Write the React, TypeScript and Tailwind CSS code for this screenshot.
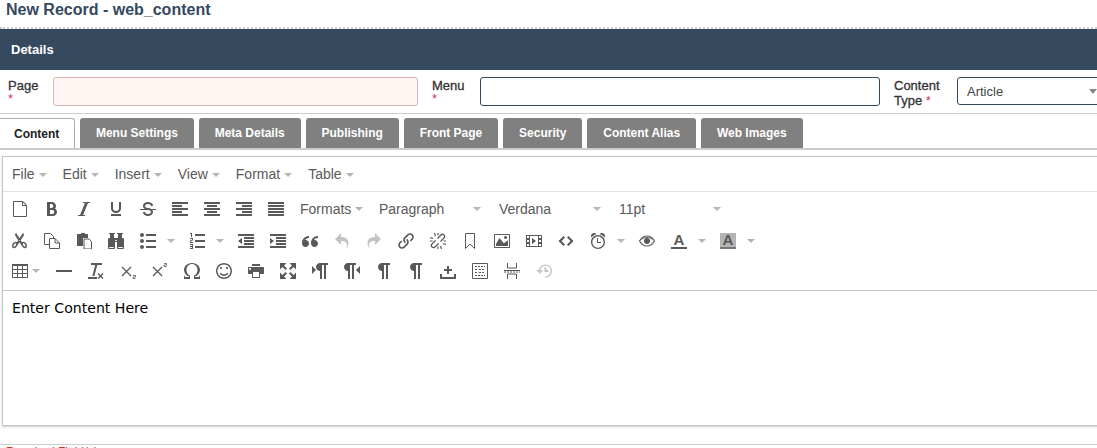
import React from 'react';
import {
  ImFileEmpty, ImBold, ImItalic, ImUnderline, ImStrikethrough, ImParagraphLeft, ImParagraphCenter,
  ImParagraphRight, ImParagraphJustify, ImScissors, ImBinoculars, ImList2,
  ImListNumbered, ImIndentDecrease, ImIndentIncrease, ImQuotesLeft, ImUndo2, ImRedo2, ImLink,
  ImImage, ImFilm, ImEmbed, ImAlarm, ImTable2, ImClearFormatting,
  ImOmega, ImSmile, ImPrinter, ImEnlarge, ImLtr, ImRtl, ImPilcrow, ImHistory,
} from 'react-icons/im';

const Caret = () => <span className="inline-block shrink-0 w-0 h-0 border-x-[4px] border-x-transparent border-t-[4px] border-t-[#b5b5b5]" />;

const Copy = () => (
  <svg width="16" height="16" viewBox="0 0 16 16" fill="none" stroke="currentColor">
    <path d="M.5 .5h6l3 3v1.500M.5 .5v11h5" />
    <path d="M5.500 5.500h5.500l4.500 4.500v5.500h-10z" />
    <path d="M11 5.500v4.500h4.500" />
  </svg>
);

const Paste = () => (
  <svg width="16" height="16" viewBox="0 0 16 16" fill="currentColor">
    <path d="M5 0h4v1h3v4H7v8H1V1h4z" />
    <path d="M8 6h5l2.500 2.500V16H8z" fill="#fff" stroke="currentColor" />
  </svg>
);

const Unlink = () => (
  <svg width="16" height="16" viewBox="0 0 16 16" fill="none" stroke="currentColor" strokeWidth="1.200">
    <path d="M5.500 7.500L2 11a2.100 2.100 0 0 0 3 3l3.500-3.500M10.500 8.500L14 5a2.100 2.100 0 0 0-3-3L7.500 5.500" />
    <path d="M0 4.500l3 1M4.500 0l1 3M16 11.500l-3-1M11.500 16l-1-3M0 8h2.500M8 0v2.500M16 8h-2.500M8 16v-2.500" />
  </svg>
);

const Bookmark = () => (
  <svg width="16" height="16" viewBox="0 0 16 16" fill="none" stroke="currentColor" strokeWidth="1">
    <path d="M3.500 .5h9v15L8 11l-4.500 4.500z" />
  </svg>
);

const Eye = () => (
  <svg width="16" height="16" viewBox="0 0 16 16" fill="none" stroke="currentColor">
    <path d="M.5 8C2.500 4.500 5 3 8 3s5.500 1.500 7.500 5c-2 3.500-4.500 5-7.500 5S2.500 11.500.5 8z" strokeWidth="1.200" />
    <path d="M2.500 6.500C4 5 6 4.500 8 4.500s4 .5 5.500 2" />
    <circle cx="8" cy="8" r="3" fill="currentColor" stroke="none" />
  </svg>
);

const Sub = () => (
  <svg width="16" height="16" viewBox="0 0 16 16" fill="none" stroke="currentColor" strokeWidth="1.300">
    <path d="M2 4l9 9M11 4l-9 9" />
    <path d="M13 12.500h2.500v1.500H13v1.500h2.500" strokeWidth=".8" />
  </svg>
);

const Sup = () => (
  <svg width="16" height="16" viewBox="0 0 16 16" fill="none" stroke="currentColor" strokeWidth="1.300">
    <path d="M1 4l9 9M10 4l-9 9" />
    <path d="M12 .5h2.500V2H12v1.500h2.500" strokeWidth=".8" />
  </svg>
);

const Hr = () => <span className="block w-4 h-[2px] bg-[#595959]" />;

const Nonbreaking = () => (
  <svg width="16" height="16" viewBox="0 0 16 16" fill="currentColor">
    <path d="M7 3h2v3h3v2H9v3H7V8H4V6h3zM0 11h2v3h12v-3h2v5H0z" />
  </svg>
);

const Template = () => (
  <svg width="16" height="16" viewBox="0 0 16 16" fill="none" stroke="currentColor">
    <path d="M.5 .5h15v15H.5z" />
    <path d="M3 3.500h10M3 6.500h3M7 6.500h2M10 6.500h3M3 9.500h3M7 9.500h2M10 9.500h3M3 12.500h10" strokeDasharray="2 1" />
  </svg>
);

const PageBreak = () => (
  <svg width="16" height="16" viewBox="0 0 16 16" fill="none" stroke="currentColor">
    <path d="M3.500 0v5h9V0M3.500 16v-5h9v5M0 7.500h16" />
    <path d="M0 9h16" strokeDasharray="2 1" />
  </svg>
);

const TextColor = () => (
  <span className="block w-4 h-4 font-bold text-[15px] leading-[14px] text-center border-b-2 border-[#595959]">A</span>
);

const BackColor = () => (
  <span className="block w-4 h-4 bg-[#b3b3b3] font-bold text-[15px] leading-[14px] text-center border-b-2 border-[#777]">A</span>
);

const Btn = ({ children, caret, off }: { children: React.ReactNode; caret?: boolean; off?: boolean }) => (
  <div className={`flex items-center h-4 text-[16px] ${caret ? 'w-[49px] pl-[8px] gap-[11px]' : 'w-[32px] justify-center'} ${off ? 'text-[#c4c4c4]' : 'text-[#595959]'}`}>
    {children}
    {caret && <Caret />}
  </div>
);

const tabs = ['Menu Settings', 'Meta Details', 'Publishing', 'Front Page', 'Security', 'Content Alias', 'Web Images'];
const menus = ['File', 'Edit', 'Insert', 'View', 'Format', 'Table'];

const Combo = ({ label, width }: { label: string; width: string }) => (
  <div className={`flex items-center justify-between ${width}`}>
    <span>{label}</span>
    <Caret />
  </div>
);

export default function App() {
  return (
    <div className="w-[1097px] h-[448px] overflow-hidden bg-white font-['Liberation_Sans',Arial,sans-serif] text-[#333]">
      <h1 className="h-[29px] pl-[6px] pt-[1px] text-[16px] leading-[18px] font-bold text-[#34495e] border-b-2 border-dotted border-[#ccc]">
        New Record - web_content
      </h1>
      <div className="h-[41px] bg-[#364a5f] pl-[11px] flex items-center text-[13px] font-bold text-white">Details</div>

      <div className="h-[44px] flex items-start pt-[7px] border-b border-[#ccc] w-[1200px] text-[13px] leading-[14px] [-webkit-text-stroke:0.3px_#333]">
        <div className="w-[53px] pl-[8px] pt-[2px]">
          Page<div className="text-[#d9345b] leading-[12px] [-webkit-text-stroke:0]">*</div>
        </div>
        <div className="w-[365px] h-[29px] rounded-[3px] border border-[#e0b4b4] bg-[#fff6f4]" />
        <div className="w-[62px] pl-[14px] pt-[2px]">
          Menu<div className="text-[#d9345b] leading-[12px] [-webkit-text-stroke:0]">*</div>
        </div>
        <div className="w-[400px] h-[29px] rounded-[3px] border border-[#34495e]" />
        <div className="w-[77px] pl-[14px] pt-[1px] leading-[15px]">
          Content Type <span className="text-[#d9345b] [-webkit-text-stroke:0]">*</span>
        </div>
        <div className="w-[148px] h-[28px] pt-[1px] rounded-[3px] border border-[#34495e] flex items-center justify-between pl-[9px] pr-[7px] text-[#444] [-webkit-text-stroke:0]">
          Article
          <span className="inline-block w-0 h-0 border-x-[4px] border-x-transparent border-t-[5px] border-t-[#888]" />
        </div>
      </div>

      <div className="h-[36px] pt-[4px] flex gap-[5px] border-b-2 border-[#ccc] text-[12px] font-bold">
        <div className="h-[30px] w-[75px] pl-[14px] flex items-center bg-white border border-b-0 border-l-0 border-[#aaa] rounded-tr-[3px] text-[#222]">Content</div>
        {tabs.map((t) => (
          <div key={t} className="h-[30px] px-[15.900px] flex items-center bg-[#808080] text-white rounded-t-[3px]">{t}</div>
        ))}
      </div>

      <div className="ml-[2px] mt-[6px] w-[1200px] h-[270px] border border-[#c5c5c5] shadow-[0_1px_2px_#ccc] flex flex-col">
        <div className="h-[35px] flex items-center pl-[9px] pt-[1px] gap-[16px] border-b border-[#e2e2e2] text-[14px] text-[#595959]">
          {menus.map((m) => (
            <span key={m} className="flex items-center gap-[4px]">{m}<Caret /></span>
          ))}
        </div>

        <div className="h-[99px] pt-[9px] pl-[1px] flex flex-col gap-[16px] border-b border-[#c5c5c5] leading-none">
          <div className="flex items-center h-4">
            <Btn><ImFileEmpty /></Btn><Btn><ImBold /></Btn><Btn><ImItalic /></Btn><Btn><ImUnderline /></Btn><Btn><ImStrikethrough /></Btn>
            <Btn><ImParagraphLeft /></Btn><Btn><ImParagraphCenter /></Btn><Btn><ImParagraphRight /></Btn><Btn><ImParagraphJustify /></Btn>
            <div className="ml-[8px] flex text-[14px] text-[#595959]">
              <Combo label="Formats" width="w-[79px] pr-[16px]" />
              <Combo label="Paragraph" width="w-[120px] pr-[18px]" />
              <Combo label="Verdana" width="w-[120px] pr-[18px]" />
              <Combo label="11pt" width="w-[120px] pr-[18px]" />
            </div>
          </div>
          <div className="flex items-center h-4">
            <Btn><ImScissors /></Btn><Btn><Copy /></Btn><Btn><Paste /></Btn><Btn><ImBinoculars /></Btn>
            <Btn caret><ImList2 /></Btn><Btn caret><ImListNumbered /></Btn>
            <Btn><ImIndentDecrease /></Btn><Btn><ImIndentIncrease /></Btn><Btn><ImQuotesLeft /></Btn>
            <Btn off><ImUndo2 /></Btn><Btn off><ImRedo2 /></Btn><Btn><ImLink /></Btn><Btn><Unlink /></Btn>
            <Btn><Bookmark /></Btn><Btn><ImImage /></Btn><Btn><ImFilm /></Btn><Btn><ImEmbed /></Btn>
            <Btn caret><ImAlarm /></Btn><Btn><Eye /></Btn><Btn caret><TextColor /></Btn><Btn caret><BackColor /></Btn>
          </div>
          <div className="flex items-center h-4 -mt-[2px]">
            <div className="w-[44px] flex items-center gap-[4px] pl-[8px] h-4 text-[16px] text-[#595959]"><ImTable2 className="shrink-0" /><Caret /></div>
            <Btn><Hr /></Btn><Btn><ImClearFormatting /></Btn><Btn><Sub /></Btn><Btn><Sup /></Btn>
            <Btn><ImOmega /></Btn><Btn><ImSmile /></Btn><Btn><ImPrinter /></Btn><Btn><ImEnlarge /></Btn>
            <Btn><ImLtr /></Btn><Btn><ImRtl /></Btn><Btn><ImPilcrow /></Btn><Btn><ImPilcrow /></Btn>
            <Btn><Nonbreaking /></Btn><Btn><Template /></Btn><Btn><PageBreak /></Btn><Btn off><ImHistory /></Btn>
          </div>
        </div>

        <p className="pl-[9px] pt-[8px] text-[14.100px] leading-[18px] text-black font-['DejaVu_Sans',Verdana,sans-serif]">Enter Content Here</p>
      </div>

      <div className="mt-[18px] border-t border-[#ccc] pt-[1px] pl-[6px] text-[12px] leading-[12px] text-[#c0392b]">Required Field(s)</div>
    </div>
  );
}
